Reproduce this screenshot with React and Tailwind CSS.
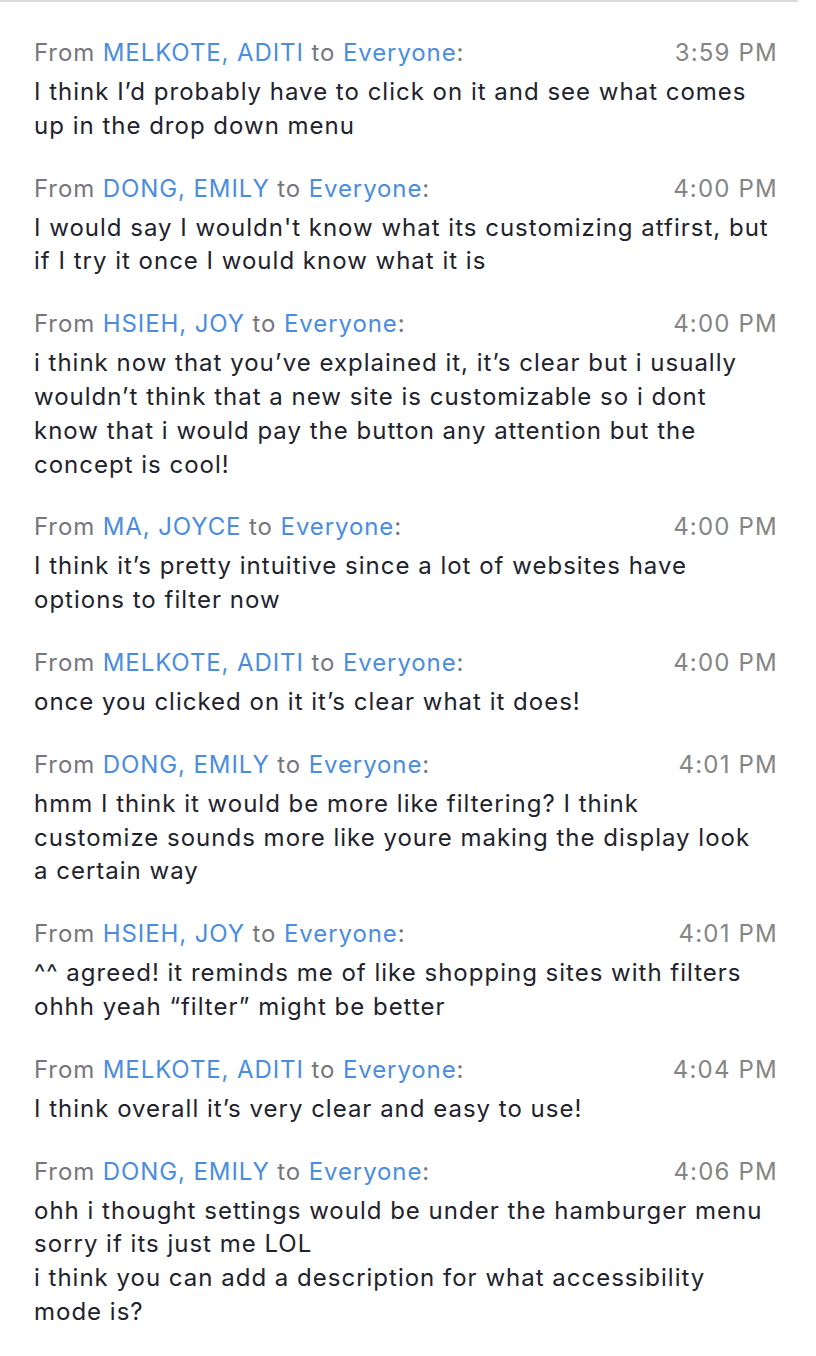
const messages = [
  { from: 'MELKOTE, ADITI', time: '3:59 PM', lines: ['I think I’d probably have to click on it and see what comes', 'up in the drop down menu'] },
  { from: 'DONG, EMILY', time: '4:00 PM', lines: ["I would say I wouldn't know what its customizing atfirst, but", 'if I try it once I would know what it is'] },
  { from: 'HSIEH, JOY', time: '4:00 PM', lines: ['i think now that you’ve explained it, it’s clear but i usually', 'wouldn’t think that a new site is customizable so i dont', 'know that i would pay the button any attention but the', 'concept is cool!'] },
  { from: 'MA, JOYCE', time: '4:00 PM', lines: ['I think it’s pretty intuitive since a lot of websites have', 'options to filter now'] },
  { from: 'MELKOTE, ADITI', time: '4:00 PM', lines: ['once you clicked on it it’s clear what it does!'] },
  { from: 'DONG, EMILY', time: '4:01 PM', lines: ['hmm I think it would be more like filtering? I think', 'customize sounds more like youre making the display look', 'a certain way'] },
  { from: 'HSIEH, JOY', time: '4:01 PM', lines: ['^^ agreed! it reminds me of like shopping sites with filters', 'ohhh yeah “filter” might be better'] },
  { from: 'MELKOTE, ADITI', time: '4:04 PM', lines: ['I think overall it’s very clear and easy to use!'] },
  { from: 'DONG, EMILY', time: '4:06 PM', lines: ['ohh i thought settings would be under the hamburger menu', 'sorry if its just me LOL', 'i think you can add a description for what accessibility', 'mode is?'] },
];

const Message = ({ from, time, lines }) => (
  <div>
    <div className="flex items-center justify-between h-[34px] mb-[5px] text-[24px] leading-[34px] tracking-[0.9px]">
      <span className="text-[#77767d]">
        From <span className="text-[#4a8de0]">{from}</span> to <span className="text-[#4a8de0]">Everyone</span>:
      </span>
      <span className="text-[#858585] tracking-[1.2px]">{time}</span>
    </div>
    <div className="text-[24px] leading-[33.8px] tracking-[1px] text-[#22222d]">
      {lines.map((l, i) => <div key={i} className="whitespace-nowrap">{l}</div>)}
    </div>
  </div>
);

export default function App() {
  return (
    <div className="w-[816px] h-[1356px] bg-white overflow-hidden" style={{ fontFamily: 'Inter, "Liberation Sans", sans-serif' }}>
      <div className="w-[798px] h-[2px] bg-[#dcdcdc]" />
      <div className="w-[798px] pl-[34px] pr-[20px] pt-[34px] flex flex-col gap-[29px]">
        {messages.map((m, i) => <Message key={i} {...m} />)}
      </div>
    </div>
  );
}
